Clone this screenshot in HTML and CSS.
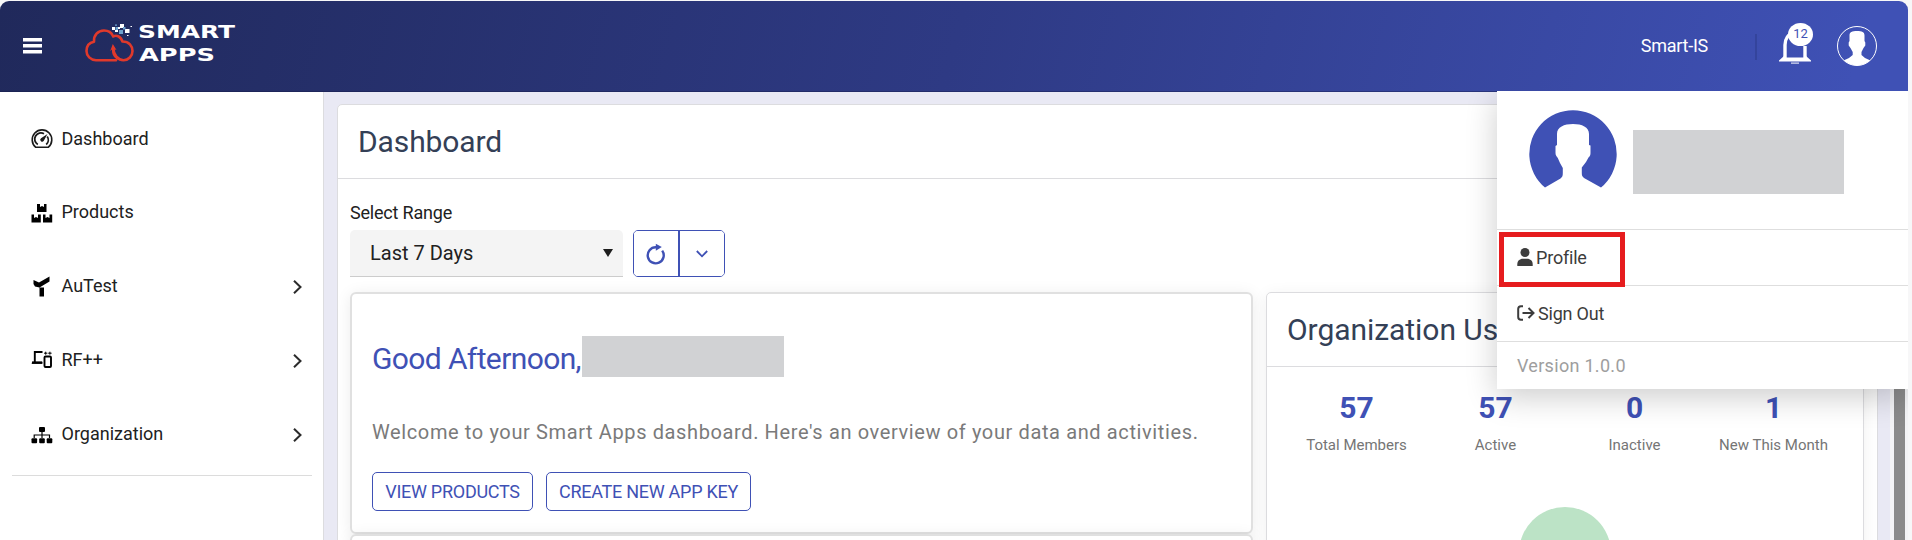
FILE: index.html
```html
<!DOCTYPE html>
<html lang="en">
<head>
<meta charset="utf-8">
<title>Smart Apps - Dashboard</title>
<link rel="stylesheet" href="styles.css">
</head>
<body>
<div class="app">
  <header class="topbar">
    <svg class="burger" viewBox="0 0 19 18"><path d="M0 1h19v3.400H0zM0 7h19v3.400H0zM0 13h19v3.400H0z" fill="#fff"/></svg>
    <svg class="logo" viewBox="0 0 160 46" width="160" height="46">
      <g fill="none" stroke="#e0392b" stroke-width="2.600" stroke-linecap="round" stroke-linejoin="round">
        <path d="M31 37.200H11C5.500 37 1.500 33 1.500 28C1.500 23 4.500 19.500 9 18.700C8.500 12 13 7.500 19 7.500C23 7.500 26.500 9.500 28 13"/>
        <path d="M28.300 13.500C31 11.800 35.500 12.700 37.500 18.500C44 18.500 47.500 23 47.500 28C47.500 33 43.500 37.200 38.500 37.200C33 37 28.500 32 28.300 25"/>
      </g>
      <path d="M25.200 28L27.800 21L31.500 27L29.400 26.300C29.500 31 31 34 35.500 37.800C29 36 26.500 31.500 27 26.500Z" fill="#e0392b"/>
      <g fill="#fff"><path d="M27 4h3v3h-3zM35 1h4v4h-4zM30 7h3v2h-3zM40 6h4.500v4h-4.500zM33 4h2v2h-2zM45.500 3h1.500v1h-1.500zM42 12h1.500v1h-1.500z"/></g>
      <g fill="#6ea3cf"><path d="M30 1.500h2v1.200h-2zM30.500 4h2.500v3h-2.500zM34 7h4v4h-4zM38 4h2.500v2.500h-2.500z"/></g>
      <g class="wordmark">
        <text x="53" y="15" textLength="97" lengthAdjust="spacingAndGlyphs">SMART</text>
        <text x="54" y="38" textLength="76" lengthAdjust="spacingAndGlyphs">APPS</text>
      </g>
    </svg>
    <span class="tenant">Smart-IS</span>
    <span class="divider"></span>
    <div class="bell">
      <svg viewBox="0 0 32 38" width="32" height="38"><path d="M6 32V19C6 13 9 8 15 7" fill="none" stroke="#fff" stroke-width="3.400"/><path d="M26 20V32" fill="none" stroke="#fff" stroke-width="3.400"/><path d="M0 34.500L5 30V31.500H27V30L32 34.500V35.500H0Z" fill="#fff"/><path d="M12 36.600h8v1h-8z" fill="#fff"/></svg>
      <span class="badge">12</span>
    </div>
    <svg class="avatar-sm" viewBox="0 0 40 40"><defs><clipPath id="ring"><circle cx="20" cy="20" r="19.500"/></clipPath></defs><circle cx="20" cy="20" r="19.500" fill="none" stroke="#fff" stroke-width="1"/><path clip-path="url(#ring)" d="M12.500 9.500C12.500 6 15 5 20 5s7.500 1 7.500 4.500V15l.8 1.500v3L26.500 22 24.500 26v3L28 32l6 2.700V41H6v-6.300l6-2.700 3.700-3v-3L13.500 22l-1.800-2.500v-3l.8-1.500Z" fill="#fff"/></svg>
  </header>

  <div class="body">
    <nav class="sidebar">
      <a class="item first"><svg viewBox="0 0 22 22"><g fill="none" stroke="#1b1b1b" stroke-width="1.600"><path d="M4.800 19.300A9.800 9.800 0 1 1 17.200 19.300Z" stroke-linejoin="round"/><path d="M6.800 16.500A6 6 0 0 1 13 5.800M16.200 8.500A6 6 0 0 1 15.200 16.500" stroke-width="1.800"/></g><path d="M16.500 6L12.800 12.800A1.900 1.900 0 1 1 10 10.300Z" fill="#1b1b1b"/></svg><span>Dashboard</span></a>
      <a class="item"><svg viewBox="0 0 22 22"><path d="M6 2h3v3l2-1 2 1V2h2.500v8H6zM.500 12.500h2.500v3.500l2-1 2 1v-3.500h2.800v8H.500zM12 12.500h2.500v3.500l2-1 2 1v-3.500h2.700v8H12z" fill="#000"/></svg><span>Products</span></a>
      <a class="item"><svg viewBox="0 0 22 22"><path d="M2.500 5L8 7.500 18.500 1.500V6.500L8.500 12.500 4 11.500 2.500 9ZM8.500 12.500H13V21.500H8.500Z" fill="#000"/></svg><span>AuTest</span><svg class="chev" viewBox="0 0 9 14"><path d="M1 .800L7.500 7 1 13.200" fill="none" stroke="#2b2b2b" stroke-width="2"/></svg></a>
      <a class="item"><svg viewBox="0 0 22 22"><path d="M11.500 3H3.800V13.500M1 13.800H11.500" fill="none" stroke="#000" stroke-width="1.900"/><path d="M1.200 12.500H11V14.800H.600Z"/><rect x="13.500" y="7.500" width="6.500" height="10.500" rx="1" fill="none" stroke="#000" stroke-width="1.900"/><path d="M13 4.200h3.400M14.700 2.700v3M17.200 4.200h3.400M18.900 2.700v3" stroke="#000" stroke-width="1"/></svg><span>RF++</span><svg class="chev" viewBox="0 0 9 14"><path d="M1 .800L7.500 7 1 13.200" fill="none" stroke="#2b2b2b" stroke-width="2"/></svg></a>
      <a class="item last"><svg viewBox="0 0 22 22"><g fill="#000"><rect x="8" y="3" width="6" height="5" rx="1"/><rect x=".500" y="14.200" width="5.600" height="5" rx="1"/><rect x="8.200" y="14.200" width="5.600" height="5" rx="1"/><rect x="15.700" y="14.200" width="5.600" height="5" rx="1"/></g><path d="M3.200 14V11H18.500V14M11 8V14" fill="none" stroke="#000" stroke-width="1.200"/></svg><span>Organization</span><svg class="chev" viewBox="0 0 9 14"><path d="M1 .800L7.500 7 1 13.200" fill="none" stroke="#2b2b2b" stroke-width="2"/></svg></a>
      <hr class="rule">
    </nav>

    <main class="main">
      <section class="panel">
        <h1 class="panel-title"><span>Dashboard</span></h1>
        <div class="content">
          <label class="range-label"><span>Select Range</span></label>
          <div class="filters">
            <div class="select"><span>Last 7 Days</span><svg width="10" height="8" viewBox="0 0 10 8"><path d="M0 0h10L5 8z" fill="#1d1d1d"/></svg></div>
            <div class="btn-group">
              <button><svg width="20" height="22" viewBox="0 0 20 22"><path d="M16.200 7.600A8 8 0 1 1 9.800 4.300H12" fill="none" stroke="#3f51b5" stroke-width="2.400"/><path d="M9.800 .800L15.800 4 9.800 7.700Z" fill="#3f51b5"/></svg></button>
              <button><svg width="12" height="8" viewBox="0 0 12 8"><path d="M.800 1L6 6.300 11.200 1" fill="none" stroke="#3f51b5" stroke-width="1.800"/></svg></button>
            </div>
          </div>
          <div class="cards">
            <div class="col">
              <article class="card welcome">
                <h2 class="greet"><span>Good Afternoon,</span><i class="redact"></i></h2>
                <p class="lead">Welcome to your Smart Apps dashboard. Here's an overview of your data and activities.</p>
                <div class="actions"><button class="view">VIEW PRODUCTS</button><button class="create">CREATE NEW APP KEY</button></div>
              </article>
              <article class="card next"></article>
            </div>
            <article class="org">
              <h2 class="org-title"><span>Organization Users</span></h2>
              <div class="stats">
                <div class="stat"><b>57</b><span>Total Members</span></div>
                <div class="stat"><b>57</b><span>Active</span></div>
                <div class="stat"><b>0</b><span>Inactive</span></div>
                <div class="stat"><b>1</b><span>New This Month</span></div>
              </div>
              <div class="pie"></div>
            </article>
          </div>
        </div>
      </section>
    </main>
    <div class="scroll"></div>
  </div>

  <div class="menu">
    <div class="who">
      <svg width="88" height="78" viewBox="0 0 88 78"><path d="M16 77.500A43.700 43.700 0 1 1 72 77.500L55 68C53 66.500 52.800 65 52.800 63V57.500L57 52 59.500 47.500C61.500 46 61.500 44 61.500 42V35.500L60 35V24C60 17 53 14 44 14S28 17 28 24V35L26.500 36V43C26.500 45.500 28 46.500 28.800 48L31 53 33.800 58V63C33.800 65.500 33.500 67 31.500 68.500Z" fill="#3f51b5"/></svg>
      <i class="redact"></i>
    </div>
    <a class="entry profile"><svg width="16" height="18" viewBox="0 0 16 18"><circle cx="8" cy="4.500" r="4.500" fill="#3c3c3c"/><path d="M.300 18V16.500C.300 13 2.500 10.800 6 10.800h4c3.500 0 5.700 2.200 5.700 5.700V18Z" fill="#3c3c3c"/></svg><span>Profile</span></a>
    <a class="entry signout"><svg width="18" height="16" viewBox="0 0 18 16"><path d="M6 1.200H4C2 1.200 1.200 2.200 1.200 4v8C1.200 13.800 2 14.800 4 14.800H6" fill="none" stroke="#3c3c3c" stroke-width="2"/><path d="M5.500 8H16M11.500 3L16.500 8l-5 5" fill="none" stroke="#3c3c3c" stroke-width="2"/></svg><span>Sign Out</span></a>
    <div class="entry version"><span>Version 1.0.0</span></div>
    <div class="highlight"></div>
  </div>
</div>
</body>
</html>
```

FILE: styles.css
```css
* { box-sizing: border-box; }
body { margin: 0; background: #f7f7f8; font-family: Roboto, sans-serif; color: #212121; width: 1912px; height: 540px; overflow: hidden; }
h1, h2, p { margin: 0; font-weight: 400; }
button { background: #fff; font: inherit; padding: 0; cursor: pointer; }
svg { flex: none; display: block; overflow: visible; }
span { white-space: nowrap; }

.app { position: relative; width: 1908px; height: 540px; padding-top: 1px; display: flex; flex-direction: column; }

.topbar { height: 91px; flex: none; display: flex; align-items: center; border-radius: 9px 9px 0 0; background: linear-gradient(105deg, #20295b 0%, #2e3a84 50%, #3f51b5 97%); box-shadow: inset 0 -1px 0 rgba(20, 25, 70, .4); color: #fff; }
.burger { width: 19px; height: 18px; margin: 0 0 2px 23px; }
.logo { margin: 0 0 2px 43px; }
.wordmark { font: bold 18.5px "DejaVu Sans", sans-serif; fill: #fff; }
.tenant { margin: 0 0 2px auto; font-size: 18px; letter-spacing: -0.25px; }
.divider { width: 2px; height: 26px; margin: 0 22px 0 47px; background: #34449c; }
.bell { position: relative; width: 32px; height: 38px; margin-bottom: 4px; }
.badge { position: absolute; left: 9px; top: -3px; width: 25px; height: 23px; border-radius: 50%; background: #fff; color: #3f51b5; font-size: 13px; line-height: 22px; text-align: center; }
.avatar-sm { width: 40px; height: 40px; margin: 0 31px 1px 26px; }

.body { flex: 1; min-height: 0; display: flex; }
.sidebar { width: 324px; flex: none; background: #fff; border-right: 1px solid #dcdcdf; padding-top: 9px; }
.item { height: 74px; display: flex; align-items: center; padding: 0 21px 0 31px; font-size: 18px; color: #212121; }
.item.first { height: 74px; }
.item.first + .item { height: 73px; }
.item.last { height: 75px; }
.item > svg:first-child { width: 22px; height: 22px; margin: 2px 8.5px 0 0; }
.item .chev { width: 9px; height: 14px; margin: 3px 0 0 auto; }
.rule { border: 0; height: 1px; background: #dcdcdc; margin: 4px 11px 0 12px; }

.main { flex: 1; min-width: 0; background: #e9e9f4; padding: 12px 12px 0 13px; overflow: hidden; }
.panel { height: 600px; background: #fff; border: 1px solid #dcdcdf; border-radius: 5px; }
.panel-title { height: 74px; border-bottom: 1px solid #dcdcdf; padding-left: 20px; font-size: 30px; line-height: 74px; letter-spacing: -.1px; color: #344056; }
.content { padding: 22px 12px 0; }
.range-label { display: block; height: 29px; font-size: 18px; line-height: 24px; letter-spacing: -.2px; }
.filters { display: flex; gap: 10px; height: 47px; }
.select { width: 273px; display: flex; align-items: center; justify-content: space-between; padding: 0 10px 0 20px; border-radius: 5px 5px 0 0; border-bottom: 1px solid #ccc; background: #f4f4f4; font-size: 20px; }
.btn-group { display: flex; width: 92px; border: 1px solid #3f51b5; border-radius: 5px; overflow: hidden; }
.btn-group button { flex: 1; border: 0; display: flex; align-items: center; justify-content: center; }
.btn-group button + button { border-left: 2px solid #3f51b5; }

.cards { display: flex; gap: 13px; margin-top: 15px; }
.col { width: 903px; flex: none; }
.card { border: 2px solid #e0e0e0; border-radius: 6px; background: #fff; box-shadow: 0 2px 16px rgba(0, 0, 0, .08); }
.welcome { height: 242px; padding: 42px 20px 0; }
.next { position: relative; height: 60px; }
.greet { display: flex; height: 41px; font-size: 30px; line-height: 45px; letter-spacing: -.62px; color: #3f51b5; }
.redact { display: block; background: #d1d2d4; }
.greet .redact { width: 202px; height: 41px; }
.greet span { width: 210px; }
.lead { margin-top: 43px; height: 52px; font-size: 20px; line-height: 24px; letter-spacing: .62px; color: #7a7a7a; white-space: nowrap; }
.actions { display: flex; gap: 13px; }
.actions button { height: 39px; border: 1px solid #3f51b5; border-radius: 5px; color: #3f51b5; font-size: 18px; letter-spacing: -.27px; white-space: nowrap; }
.actions .view { width: 161px; }
.actions .create { width: 205px; }

.org { width: 598px; flex: none; height: 330px; border: 1px solid #dcdcdf; border-radius: 5px; background: #fff; box-shadow: 0 2px 16px rgba(0, 0, 0, .06); }
.org-title { height: 74px; border-bottom: 1px solid #dcdcdf; padding-left: 20px; font-size: 30px; line-height: 74px; letter-spacing: -.05px; color: #344056; }
.stats { display: grid; grid-template-columns: repeat(4, 139px); padding: 22px 0 0 20px; height: 140px; align-content: start; }
.stat { display: flex; flex-direction: column; align-items: center; }
.stat b { font-size: 30px; line-height: 38px; color: #3f51b5; }
.stat span { margin-top: 8px; font-size: 15px; line-height: 20px; color: #757575; }
.pie { width: 92px; height: 92px; margin: 0 auto; border-radius: 50%; background: #bce3c6; }

.scroll { width: 18px; flex: none; border: solid #f4f4f6; border-width: 0 3px 0 4px; background: #8b8b8b; }

.menu { position: absolute; left: 1497px; top: 91px; width: 411px; height: 298px; background: #fff; box-shadow: 0 8px 30px rgba(0, 0, 0, .2); clip-path: inset(0 0 -60px -60px); }
.who { height: 139px; display: flex; padding: 19px 0 0 31.5px; border-bottom: 1px solid #dedede; }
.who .redact { width: 211px; height: 64px; margin: 20px 0 0 16px; }
.entry { display: flex; align-items: center; height: 56px; padding: 0 0 1px 20px; border-bottom: 1px solid #dedede; font-size: 18px; letter-spacing: -.2px; color: #3c3c3c; }
.profile svg { margin-right: 3px; }
.signout svg { margin-right: 3px; }
.version { height: 47px; border: 0; color: #9e9e9e; letter-spacing: .3px; }
.highlight { position: absolute; left: 2px; top: 141px; width: 126px; height: 55px; border: 5px solid #e61c1e; }
```
